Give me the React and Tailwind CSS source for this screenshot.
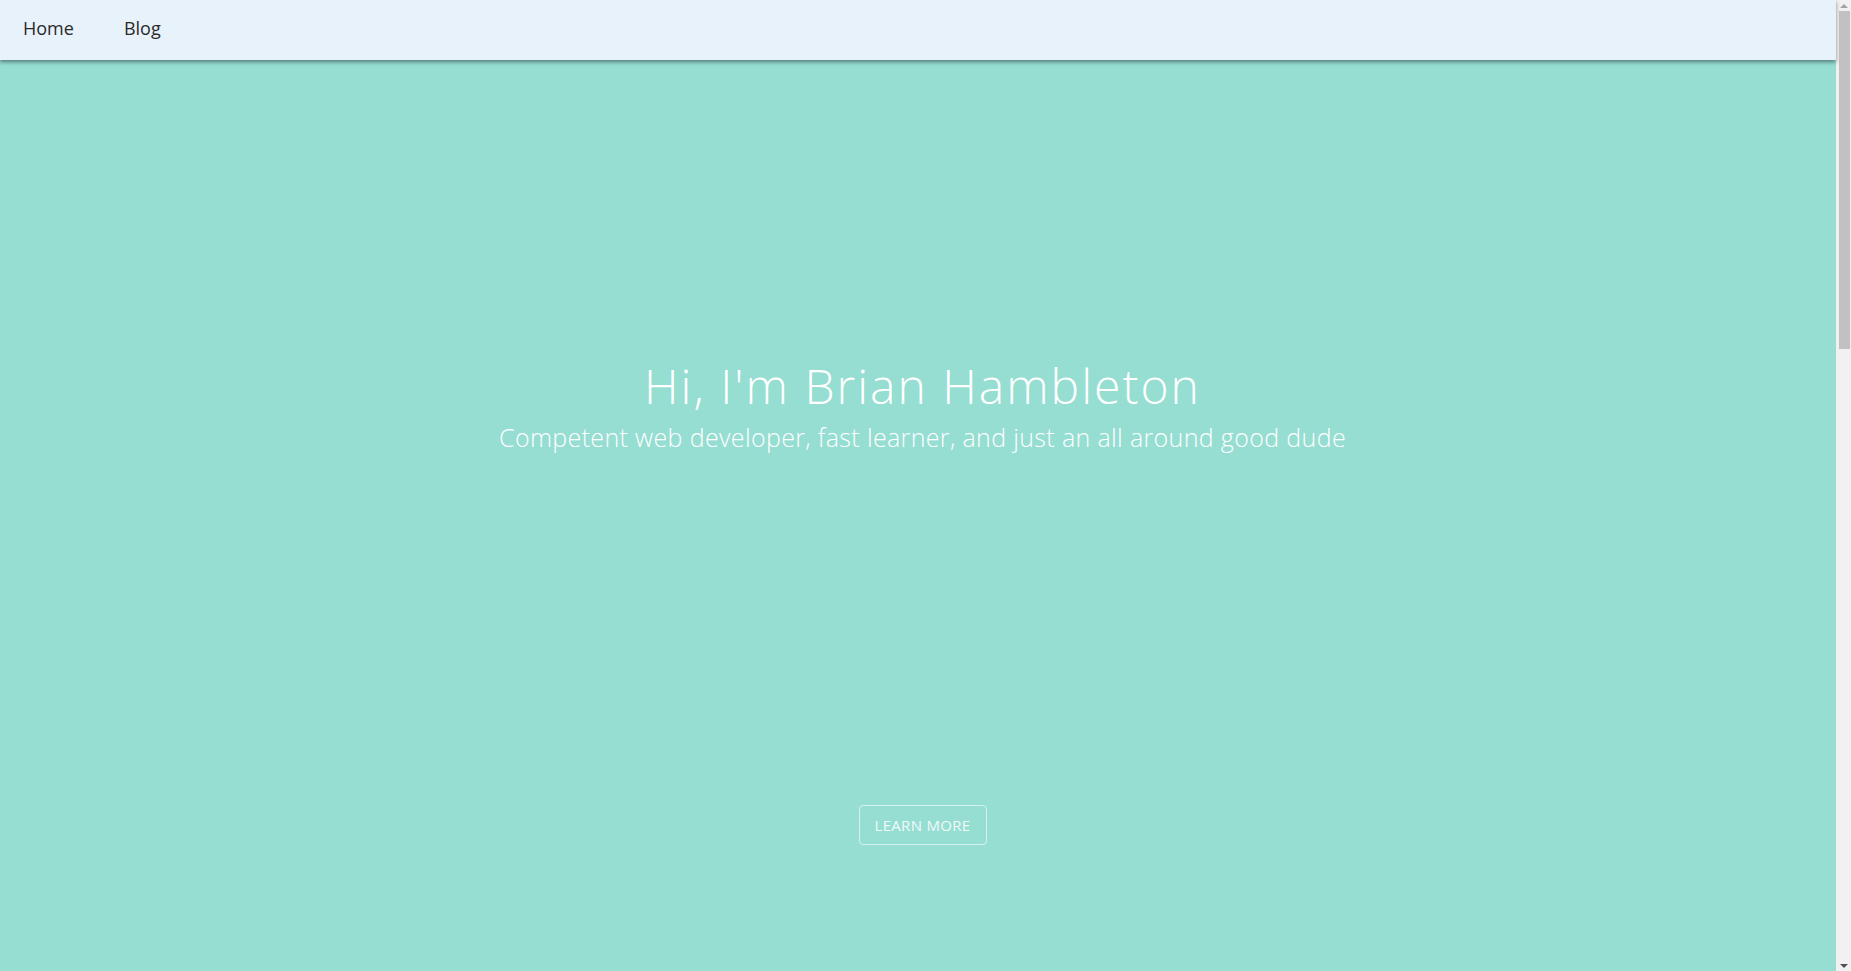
import React from 'react';

const NavBar = () => (
  <nav className="relative z-10 shrink-0 h-[60px] pb-[4px] bg-[#e8f2fb] shadow-[0_2px_4px_rgba(0,0,0,0.45)] flex items-center px-[23px] gap-[50px] text-[18px] text-[#2a2a2a] font-['Open_Sans','Liberation_Sans',sans-serif]">
    <a href="#">Home</a>
    <a href="#">Blog</a>
  </nav>
);

const Hero = () => (
  <section className="flex-1 bg-[#96ddd2] pl-[9px] flex flex-col items-center text-white font-['Open_Sans','Liberation_Sans',sans-serif]">
    <h1 className="mt-[298px] text-[48px] font-light leading-[56px] tracking-[2px]">Hi, I'm Brian Hambleton</h1>
    <p className="mt-[7px] text-[25px] font-light leading-[32px] tracking-[0.35px]">
      Competent web developer, fast learner, and just an all around good dude
    </p>
    <button className="mt-[352px] w-[128px] h-[40px] border border-white/60 rounded-[4px] text-[15px] text-white/85 tracking-[0.3px]">
      LEARN MORE
    </button>
  </section>
);

const ScrollBar = () => (
  <div className="w-[15px] shrink-0 bg-[#f1f1f1] flex flex-col items-center">
    <div className="h-[11px] flex items-center justify-center">
      <div className="w-0 h-0 border-x-[4px] border-x-transparent border-b-[4px] border-b-[#a3a3a3]" />
    </div>
    <div className="ml-[2px] w-[11px] h-[338px] bg-[#c1c1c1]" />
    <div className="flex-1" />
    <div className="h-[11px] flex items-center justify-center">
      <div className="w-0 h-0 border-x-[4px] border-x-transparent border-t-[4px] border-t-[#505050]" />
    </div>
  </div>
);

export default function App() {
  return (
    <div className="h-screen flex overflow-hidden">
      <div className="flex-1 flex flex-col">
        <NavBar />
        <Hero />
      </div>
      <ScrollBar />
    </div>
  );
}
